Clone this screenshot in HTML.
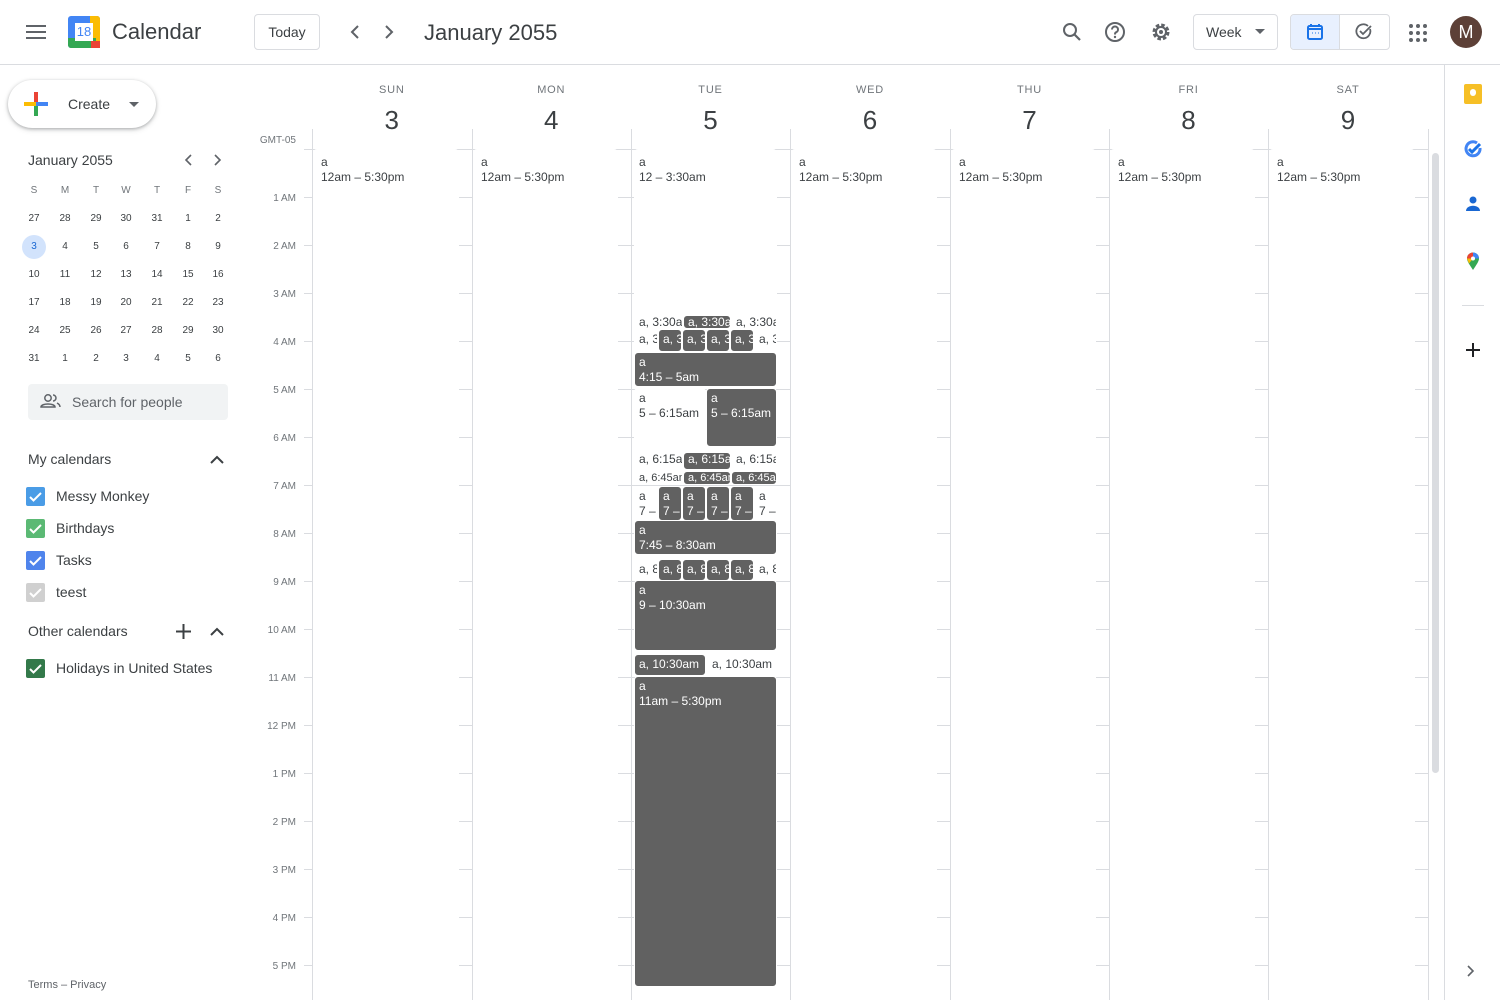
<!DOCTYPE html>
<html><head><meta charset="utf-8"><style>
*{box-sizing:border-box;margin:0;padding:0}
body{width:1500px;height:1000px;overflow:hidden;background:#fff;font-family:"Liberation Sans",Roboto,sans-serif;color:#3c4043;position:relative}
.a{position:absolute}
.ev{position:absolute;font-size:12px;line-height:15px;padding:2px 0 0 4px;overflow:hidden;white-space:nowrap;border-radius:4px}
.d{background:#616161;color:#fff;border:1px solid #fff}
.w{background:#fff;color:#3c4043;border:1px solid #fff}
.one{padding-top:0!important;line-height:13px}
.mc{position:absolute;width:24px;text-align:center;font-size:10px;color:#3c4043}
.cb{position:absolute;left:26px;width:19px;height:19px;border-radius:2px}
.cb svg{position:absolute;left:2px;top:2px}
.cl{position:absolute;left:56px;font-size:14px;color:#3c4043}
</style></head><body>
<div class="a" style="left:0;top:64px;width:1500px;height:1px;background:#dadce0"></div>
<svg class="a" style="left:26px;top:22px" width="20" height="20"><path d="M0 4h20M0 10h20M0 16h20" stroke="#5f6368" stroke-width="2"/></svg>
<div class="a" style="left:68px;top:16px;width:32px;height:32px;border-radius:3px;background:#4285f4"></div>
<div class="a" style="left:90px;top:16px;width:10px;height:26px;background:#fbbc04;border-radius:0 3px 0 0"></div>
<div class="a" style="left:68px;top:38px;width:28px;height:10px;background:#34a853;border-radius:0 0 0 3px"></div>
<div class="a" style="left:91px;top:41px;width:9px;height:7px;background:#ea4335"></div>
<div class="a" style="left:75px;top:23px;width:18px;height:18px;background:#fff;color:#4285f4;font-size:13px;text-align:center;line-height:18px">18</div>
<div class="a" style="left:112px;top:19px;font-size:22px;color:#3c4043">Calendar</div>
<div class="a" style="left:254px;top:14px;width:66px;height:36px;border:1px solid #dadce0;border-radius:4px;font-size:14px;text-align:center;line-height:34px">Today</div>
<svg class="a" style="left:348px;top:24px" width="50" height="16"><path d="M10 2l-6 6 6 6M38 2l6 6-6 6" fill="none" stroke="#5f6368" stroke-width="2"/></svg>
<div class="a" style="left:424px;top:20px;font-size:22px;color:#3c4043">January 2055</div>
<svg class="a" style="left:1061px;top:21px" width="22" height="22"><circle cx="9" cy="9" r="6" fill="none" stroke="#5f6368" stroke-width="2"/><path d="M13 13l6 6" stroke="#5f6368" stroke-width="2.2"/></svg>
<svg class="a" style="left:1104px;top:21px" width="22" height="22"><circle cx="11" cy="11" r="9" fill="none" stroke="#5f6368" stroke-width="2"/><path d="M8 8.5a3 3 0 1 1 4 2.8c-1 .5-1 1-1 2.2" fill="none" stroke="#5f6368" stroke-width="2"/><circle cx="11" cy="16" r="1.2" fill="#5f6368"/></svg>
<svg class="a" style="left:1150px;top:21px" width="22" height="22"><circle cx="11" cy="11" r="7" fill="none" stroke="#5f6368" stroke-width="3" stroke-dasharray="3.5 2"/><circle cx="11" cy="11" r="5" fill="none" stroke="#5f6368" stroke-width="2"/><circle cx="11" cy="11" r="2" fill="#5f6368"/></svg>
<div class="a" style="left:1193px;top:14px;width:85px;height:36px;border:1px solid #dadce0;border-radius:4px;font-size:14px;line-height:34px;padding-left:12px;color:#3c4043">Week</div>
<svg class="a" style="left:1255px;top:29px" width="10" height="6"><path d="M0 0h10L5 5z" fill="#5f6368"/></svg>
<div class="a" style="left:1290px;top:14px;width:100px;height:36px;border:1px solid #dadce0;border-radius:4px;overflow:hidden"><div style="width:49px;height:36px;background:#e8f0fe;border-right:1px solid #dadce0"></div></div>
<svg class="a" style="left:1306px;top:23px" width="18" height="18"><rect x="2" y="3" width="14" height="13" rx="1.5" fill="none" stroke="#1a73e8" stroke-width="2"/><path d="M2 6h14M5 1v3M13 1v3" stroke="#1a73e8" stroke-width="2"/><path d="M6 10h1M9 10h1M12 10h1" stroke="#1a73e8"/></svg>
<svg class="a" style="left:1355px;top:23px" width="18" height="18"><path d="M15 6a7 7 0 1 1-2-3" fill="none" stroke="#5f6368" stroke-width="1.8"/><path d="M5 8l3 3 8-8" fill="none" stroke="#5f6368" stroke-width="1.8"/></svg>
<svg class="a" style="left:1409px;top:24px" width="18" height="18"><g fill="#5f6368"><circle cx="2" cy="2" r="2"/><circle cx="9" cy="2" r="2"/><circle cx="16" cy="2" r="2"/><circle cx="2" cy="9" r="2"/><circle cx="9" cy="9" r="2"/><circle cx="16" cy="9" r="2"/><circle cx="2" cy="16" r="2"/><circle cx="9" cy="16" r="2"/><circle cx="16" cy="16" r="2"/></g></svg>
<div class="a" style="left:1450px;top:16px;width:32px;height:32px;border-radius:50%;background:#5d4037;color:#fff;font-size:18px;text-align:center;line-height:32px">M</div>

<div class="a" style="left:8px;top:80px;width:148px;height:48px;border-radius:24px;box-shadow:0 1px 3px rgba(60,64,67,.35),0 2px 6px rgba(60,64,67,.15)"></div>
<div class="a" style="left:24px;top:102px;width:12px;height:4px;background:#fbbc04"></div>
<div class="a" style="left:36px;top:102px;width:12px;height:4px;background:#4285f4"></div>
<div class="a" style="left:34px;top:92px;width:4px;height:10px;background:#ea4335"></div>
<div class="a" style="left:34px;top:106px;width:4px;height:10px;background:#34a853"></div>
<div class="a" style="left:68px;top:96px;font-size:14px;color:#3c4043">Create</div>
<svg class="a" style="left:129px;top:102px" width="10" height="5"><path d="M0 0h10L5 5z" fill="#5f6368"/></svg>
<div class="a" style="left:28px;top:152px;font-size:14px;color:#3c4043">January 2055</div>
<svg class="a" style="left:183px;top:154px" width="44" height="12"><path d="M8 1l-5 5 5 5M32 1l5 5-5 5" fill="none" stroke="#5f6368" stroke-width="1.6"/></svg>
<div class="a" style="left:22px;top:235px;width:24px;height:24px;border-radius:50%;background:#d2e3fc"></div>
<div id="mini"></div>
<div class="a" style="left:28px;top:384px;width:200px;height:36px;background:#f1f3f4;border-radius:4px"></div>
<svg class="a" style="left:40px;top:393px" width="22" height="16"><circle cx="8" cy="5" r="3.2" fill="none" stroke="#5f6368" stroke-width="1.5"/><path d="M1 14c0-4 14-4 14 0z" fill="none" stroke="#5f6368" stroke-width="1.5"/><path d="M13 2a3 3 0 0 1 0 6M17 10c2 1 3 2 3 4" fill="none" stroke="#5f6368" stroke-width="1.5"/></svg>
<div class="a" style="left:72px;top:394px;font-size:14px;color:#5f6368">Search for people</div>
<div class="a" style="left:28px;top:451px;font-size:14px;color:#3c4043">My calendars</div>
<svg class="a" style="left:210px;top:455px" width="14" height="9"><path d="M1 8l6-6 6 6" fill="none" stroke="#3c4043" stroke-width="2"/></svg>
<div class="cb" style="top:487px;background:#4a9ce6"><svg width="15" height="15"><path d="M2 8l3.5 3.5L13 4" fill="none" stroke="#fff" stroke-width="2"/></svg></div><div class="cl" style="top:488px">Messy Monkey</div>
<div class="cb" style="top:519px;background:#5bb974"><svg width="15" height="15"><path d="M2 8l3.5 3.5L13 4" fill="none" stroke="#fff" stroke-width="2"/></svg></div><div class="cl" style="top:520px">Birthdays</div>
<div class="cb" style="top:551px;background:#4f84ec"><svg width="15" height="15"><path d="M2 8l3.5 3.5L13 4" fill="none" stroke="#fff" stroke-width="2"/></svg></div><div class="cl" style="top:552px">Tasks</div>
<div class="cb" style="top:583px;background:#d0d0d0"><svg width="15" height="15"><path d="M2 8l3.5 3.5L13 4" fill="none" stroke="#fff" stroke-width="2"/></svg></div><div class="cl" style="top:584px">teest</div>
<div class="a" style="left:28px;top:623px;font-size:14px;color:#3c4043">Other calendars</div>
<svg class="a" style="left:176px;top:624px" width="15" height="15"><path d="M7.5 0v15M0 7.5h15" stroke="#3c4043" stroke-width="2"/></svg>
<svg class="a" style="left:210px;top:627px" width="14" height="9"><path d="M1 8l6-6 6 6" fill="none" stroke="#3c4043" stroke-width="2"/></svg>
<div class="cb" style="top:659px;background:#33794a"><svg width="15" height="15"><path d="M2 8l3.5 3.5L13 4" fill="none" stroke="#fff" stroke-width="2"/></svg></div><div class="cl" style="top:660px">Holidays in United States</div>
<div class="a" style="left:28px;top:979px;font-size:11px;color:#5f6368">Terms – Privacy</div>

<div class="a" style="left:1444px;top:65px;width:1px;height:935px;background:#dadce0"></div>
<div class="a" style="left:1464px;top:84px;width:18px;height:20px;background:#f6bf26;border-radius:2px"></div>
<div class="a" style="left:1470px;top:89px;width:6px;height:7px;background:#fff;border-radius:3px"></div>
<svg class="a" style="left:1463px;top:140px" width="20" height="20"><path d="M17 8a7 7 0 1 1-3-5" fill="none" stroke="#4285f4" stroke-width="3"/><path d="M6 9l3 3 8-8" fill="none" stroke="#1a73e8" stroke-width="3"/></svg>
<svg class="a" style="left:1465px;top:195px" width="16" height="18"><circle cx="8" cy="5" r="3.5" fill="#1967d2"/><path d="M1 16c0-7 14-7 14 0z" fill="#1967d2"/></svg>
<svg class="a" style="left:1466px;top:252px" width="14" height="18"><path d="M7 18C3 12 1 9 1 6.5a6 6 0 0 1 12 0C13 9 11 12 7 18z" fill="#34a853"/><path d="M1 6.5a6 6 0 0 1 6-6v6z" fill="#ea4335"/><path d="M7 .5a6 6 0 0 1 6 6H7z" fill="#4285f4"/><path d="M1 6.5h6l-4 5z" fill="#fbbc04"/><circle cx="7" cy="6.5" r="2" fill="#fff"/></svg>
<div class="a" style="left:1462px;top:305px;width:22px;height:1px;background:#dadce0"></div>
<svg class="a" style="left:1465px;top:342px" width="16" height="16"><path d="M8 1v14M1 8h14" stroke="#202124" stroke-width="2"/></svg>
<svg class="a" style="left:1467px;top:965px" width="8" height="12"><path d="M1 1l5 5-5 5" fill="none" stroke="#5f6368" stroke-width="1.6"/></svg>
<div class="a" style="left:1432px;top:153px;width:7px;height:620px;background:#dadce0;border-radius:4px"></div>

<div id="grid"></div>
<script>
var g='';
var cols=[34,65,96,126,157,188,218];
var hd=['S','M','T','W','T','F','S'];
var days=[[27,28,29,30,31,1,2],[3,4,5,6,7,8,9],[10,11,12,13,14,15,16],[17,18,19,20,21,22,23],[24,25,26,27,28,29,30],[31,1,2,3,4,5,6]];
var m='';
for(var i=0;i<7;i++)m+='<div class="mc" style="left:'+(cols[i]-12)+'px;top:185px;color:#70757a">'+hd[i]+'</div>';
for(var r=0;r<6;r++)for(var i=0;i<7;i++){var c=(r==1&&i==0)?'color:#1967d2;':'';m+='<div class="mc" style="left:'+(cols[i]-12)+'px;top:'+(213+r*28)+'px;'+c+'">'+days[r][i]+'</div>';}
document.getElementById('mini').innerHTML=m;
var X=[312,471.5,631,790,950,1109,1268,1428];
var names=['SUN','MON','TUE','WED','THU','FRI','SAT'];
for(var i=0;i<7;i++){var cx=(X[i]+X[i+1])/2;
g+='<div class="a" style="left:'+(cx-30)+'px;top:84px;width:60px;text-align:center;font-size:11px;color:#70757a;letter-spacing:.8px">'+names[i]+'</div>';
g+='<div class="a" style="left:'+(cx-30)+'px;top:105px;width:60px;text-align:center;font-size:26px;color:#3c4043">'+(3+i)+'</div>';}
for(var i=0;i<8;i++)g+='<div class="a" style="left:'+Math.round(X[i])+'px;top:129px;width:1px;height:871px;background:#dadce0"></div>';
g+='<div class="a" style="left:304px;top:149px;width:1124px;height:1px;background:#dadce0"></div>';
var lab=['1 AM','2 AM','3 AM','4 AM','5 AM','6 AM','7 AM','8 AM','9 AM','10 AM','11 AM','12 PM','1 PM','2 PM','3 PM','4 PM','5 PM'];
for(var h=1;h<=17;h++){var y=149+h*48;
g+='<div class="a" style="left:304px;top:'+y+'px;width:1124px;height:1px;background:#dadce0"></div>';
g+='<div class="a" style="left:250px;top:'+(y-4)+'px;width:46px;text-align:right;font-size:10px;color:#70757a">'+lab[h-1]+'</div>';}
g+='<div class="a" style="left:250px;top:135px;width:46px;text-align:right;font-size:10px;color:#70757a">GMT-05</div>';
for(var i=0;i<7;i++){var l=Math.round(X[i])+1,w=Math.round(X[i+1])-Math.round(X[i])-14;
if(i==2){g+='<div class="ev w" style="left:634px;top:149px;width:143px;height:167px;padding-top:5px">a<br>12 – 3:30am</div>';continue;}
g+='<div class="ev w" style="left:'+l+'px;top:149px;width:'+w+'px;height:851px;padding:5px 0 0 7px">a<br>12am – 5:30pm</div>';}
function e(c,l,t,w,h,txt,x){g+='<div class="ev '+c+' '+(x||'')+'" style="left:'+l+'px;top:'+t+'px;width:'+w+'px;height:'+h+'px">'+txt+'</div>';}
e('w',634,315,49,14,'a, 3:30am','one');e('d',683,315,48,14,'a, 3:30am','one');e('w',731,315,46,14,'a, 3:30am','one');
var six=[634,658,682,706,730,754],st=['w','d','d','d','d','w'];
for(var i=0;i<6;i++)e(st[i],six[i],329,i==5?23:24,23,'a, 3:45am');
e('d',634,352,143,35,'a<br>4:15 – 5am');
e('w',634,388,72,59,'a<br>5 – 6:15am');e('d',706,388,71,59,'a<br>5 – 6:15am');
e('w',634,452,49,18,'a, 6:15am','one');e('d',683,452,48,18,'a, 6:15am','one');e('w',731,452,46,18,'a, 6:15am','one');
g+='<style>.s{font-size:11px!important;line-height:13px!important;padding-top:0!important}</style>';
g+='<div class="ev w s" style="left:634px;top:471px;width:49px;height:14px">a, 6:45am</div><div class="ev d s" style="left:683px;top:471px;width:48px;height:14px">a, 6:45am</div><div class="ev d s" style="left:731px;top:471px;width:46px;height:14px">a, 6:45am</div>';
for(var i=0;i<6;i++)e(st[i],six[i],486,i==5?23:24,35,'a<br>7 – 7:45am');
e('d',634,520,143,35,'a<br>7:45 – 8:30am');
for(var i=0;i<6;i++)e(st[i],six[i],559,i==5?23:24,22,'a, 8:30am');
e('d',634,580,143,71,'a<br>9 – 10:30am');
e('d',634,654,72,22,'a, 10:30am');e('w',707,654,70,22,'a, 10:30am');
e('d',634,676,143,311,'a<br>11am – 5:30pm');
document.getElementById('grid').innerHTML=g;
</script>
</body></html>
